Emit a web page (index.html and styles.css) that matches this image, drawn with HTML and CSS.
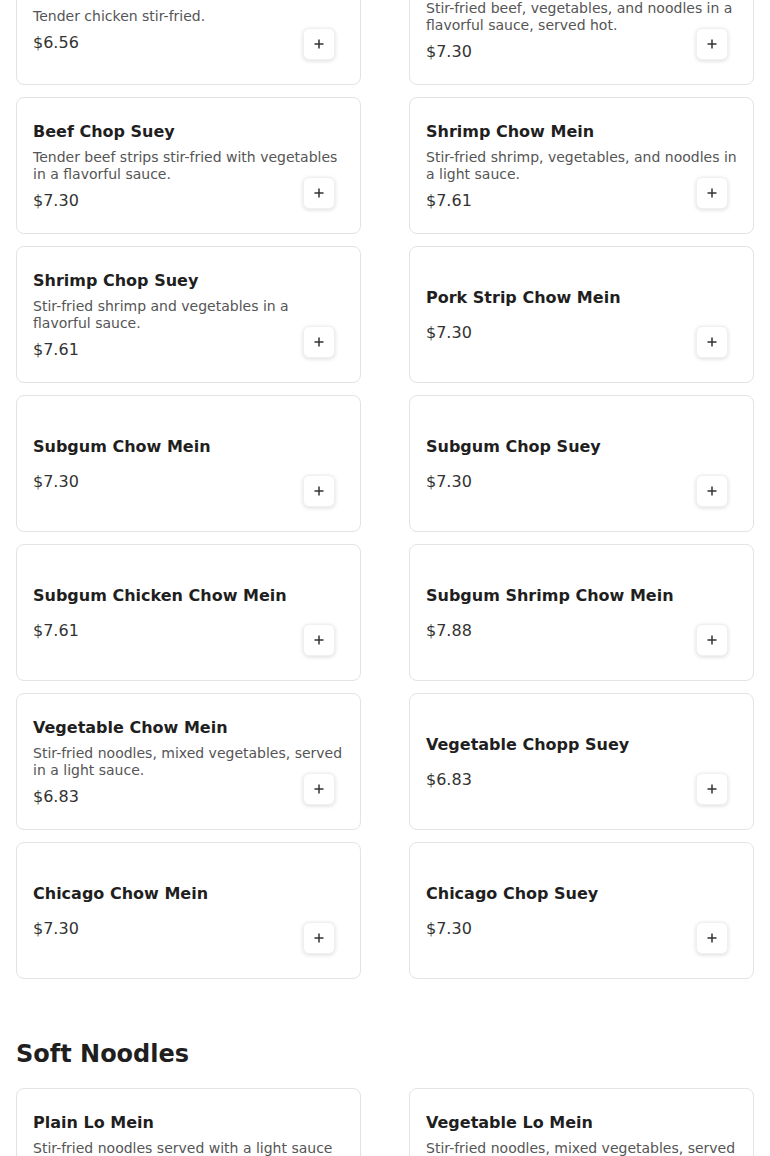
FILE: index.html
```html
<!DOCTYPE html>
<html>
<head>
    <title>Noodles Menu</title>
    <link rel="stylesheet" href="styles.css">
</head>
<body>
    <main class="menu">
        <section class="section first">
            <div class="grid">
                <div class="card">
                    <div class="info">
                        <div class="name">Chicken Chop Suey</div>
                        <div class="desc">Tender chicken stir-fried.</div>
                        <div class="price">$6.56</div>
                    </div>
                    <button class="add"><svg viewBox="0 0 12 12"><path d="M6 1.5v9M1.5 6h9"/></svg></button>
                </div>
                <div class="card">
                    <div class="info">
                        <div class="name">Beef Chow Mein</div>
                        <div class="desc">Stir-fried beef, vegetables, and noodles in a flavorful sauce, served hot.</div>
                        <div class="price">$7.30</div>
                    </div>
                    <button class="add"><svg viewBox="0 0 12 12"><path d="M6 1.5v9M1.5 6h9"/></svg></button>
                </div>
                <div class="card">
                    <div class="info">
                        <div class="name">Beef Chop Suey</div>
                        <div class="desc">Tender beef strips stir-fried with vegetables in a flavorful sauce.</div>
                        <div class="price">$7.30</div>
                    </div>
                    <button class="add"><svg viewBox="0 0 12 12"><path d="M6 1.5v9M1.5 6h9"/></svg></button>
                </div>
                <div class="card">
                    <div class="info">
                        <div class="name">Shrimp Chow Mein</div>
                        <div class="desc">Stir-fried shrimp, vegetables, and noodles in a light sauce.</div>
                        <div class="price">$7.61</div>
                    </div>
                    <button class="add"><svg viewBox="0 0 12 12"><path d="M6 1.5v9M1.5 6h9"/></svg></button>
                </div>
                <div class="card">
                    <div class="info">
                        <div class="name">Shrimp Chop Suey</div>
                        <div class="desc">Stir-fried shrimp and vegetables in a flavorful sauce.</div>
                        <div class="price">$7.61</div>
                    </div>
                    <button class="add"><svg viewBox="0 0 12 12"><path d="M6 1.5v9M1.5 6h9"/></svg></button>
                </div>
                <div class="card">
                    <div class="info">
                        <div class="name">Pork Strip Chow Mein</div>
                        <div class="desc"></div>
                        <div class="price">$7.30</div>
                    </div>
                    <button class="add"><svg viewBox="0 0 12 12"><path d="M6 1.5v9M1.5 6h9"/></svg></button>
                </div>
                <div class="card">
                    <div class="info">
                        <div class="name">Subgum Chow Mein</div>
                        <div class="desc"></div>
                        <div class="price">$7.30</div>
                    </div>
                    <button class="add"><svg viewBox="0 0 12 12"><path d="M6 1.5v9M1.5 6h9"/></svg></button>
                </div>
                <div class="card">
                    <div class="info">
                        <div class="name">Subgum Chop Suey</div>
                        <div class="desc"></div>
                        <div class="price">$7.30</div>
                    </div>
                    <button class="add"><svg viewBox="0 0 12 12"><path d="M6 1.5v9M1.5 6h9"/></svg></button>
                </div>
                <div class="card">
                    <div class="info">
                        <div class="name">Subgum Chicken Chow Mein</div>
                        <div class="desc"></div>
                        <div class="price">$7.61</div>
                    </div>
                    <button class="add"><svg viewBox="0 0 12 12"><path d="M6 1.5v9M1.5 6h9"/></svg></button>
                </div>
                <div class="card">
                    <div class="info">
                        <div class="name">Subgum Shrimp Chow Mein</div>
                        <div class="desc"></div>
                        <div class="price">$7.88</div>
                    </div>
                    <button class="add"><svg viewBox="0 0 12 12"><path d="M6 1.5v9M1.5 6h9"/></svg></button>
                </div>
                <div class="card">
                    <div class="info">
                        <div class="name">Vegetable Chow Mein</div>
                        <div class="desc">Stir-fried noodles, mixed vegetables, served in a light sauce.</div>
                        <div class="price">$6.83</div>
                    </div>
                    <button class="add"><svg viewBox="0 0 12 12"><path d="M6 1.5v9M1.5 6h9"/></svg></button>
                </div>
                <div class="card">
                    <div class="info">
                        <div class="name">Vegetable Chopp Suey</div>
                        <div class="desc"></div>
                        <div class="price">$6.83</div>
                    </div>
                    <button class="add"><svg viewBox="0 0 12 12"><path d="M6 1.5v9M1.5 6h9"/></svg></button>
                </div>
                <div class="card">
                    <div class="info">
                        <div class="name">Chicago Chow Mein</div>
                        <div class="desc"></div>
                        <div class="price">$7.30</div>
                    </div>
                    <button class="add"><svg viewBox="0 0 12 12"><path d="M6 1.5v9M1.5 6h9"/></svg></button>
                </div>
                <div class="card">
                    <div class="info">
                        <div class="name">Chicago Chop Suey</div>
                        <div class="desc"></div>
                        <div class="price">$7.30</div>
                    </div>
                    <button class="add"><svg viewBox="0 0 12 12"><path d="M6 1.5v9M1.5 6h9"/></svg></button>
                </div>
            </div>
        </section>

        <section class="section">
            <h2 class="section-title">Soft Noodles</h2>
            <div class="grid">
                <div class="card">
                    <div class="info">
                        <div class="name">Plain Lo Mein</div>
                        <div class="desc">Stir-fried noodles served with a light sauce and bean sprouts.</div>
                        <div class="price">$6.56</div>
                    </div>
                    <button class="add"><svg viewBox="0 0 12 12"><path d="M6 1.5v9M1.5 6h9"/></svg></button>
                </div>
                <div class="card">
                    <div class="info">
                        <div class="name">Vegetable Lo Mein</div>
                        <div class="desc">Stir-fried noodles, mixed vegetables, served in a light sauce.</div>
                        <div class="price">$6.83</div>
                    </div>
                    <button class="add"><svg viewBox="0 0 12 12"><path d="M6 1.5v9M1.5 6h9"/></svg></button>
                </div>
            </div>
        </section>
    </main>
</body>
</html>
```

FILE: styles.css
```css
body {
    font-family: "DejaVu Sans", sans-serif;
    margin: 0;
    padding: 0;
    background-color: #fff;
    color: #222;
}
.menu {
    padding: 0 16px;
}
/* page is scrolled part-way into the first section */
.section.first {
    margin-top: -52px;
}
.section-title {
    font-size: 24px;
    font-weight: bold;
    line-height: 28px;
    color: #1f1f1f;
    margin: 61px 0 20px;
}
.grid {
    display: grid;
    grid-template-columns: 1fr 1fr;
    column-gap: 48px;
    row-gap: 12px;
}
.card {
    position: relative;
    box-sizing: border-box;
    min-height: 137px;
    padding: 16px;
    border: 1px solid #e3e3e3;
    border-radius: 8px;
    background: #fff;
    display: flex;
    align-items: center;
}
.info {
    display: flex;
    flex-direction: column;
    gap: 8px;
    width: 100%;
}
.name {
    font-size: 16px;
    font-weight: bold;
    line-height: 19px;
    color: #1f1f1f;
}
.desc {
    font-size: 14px;
    line-height: 17px;
    color: #555;
}
.price {
    font-size: 16px;
    line-height: 19px;
    color: #333;
}
.add {
    position: absolute;
    right: 25px;
    bottom: 24px;
    width: 32px;
    height: 32px;
    padding: 0;
    border: 1px solid #f0f0f0;
    border-radius: 6px;
    background: #fff;
    box-shadow: 0 1px 4px rgba(0, 0, 0, 0.14);
    display: flex;
    align-items: center;
    justify-content: center;
    cursor: pointer;
}
.add svg {
    width: 12px;
    height: 12px;
    stroke: #333;
    stroke-width: 1.5;
    fill: none;
}
```
